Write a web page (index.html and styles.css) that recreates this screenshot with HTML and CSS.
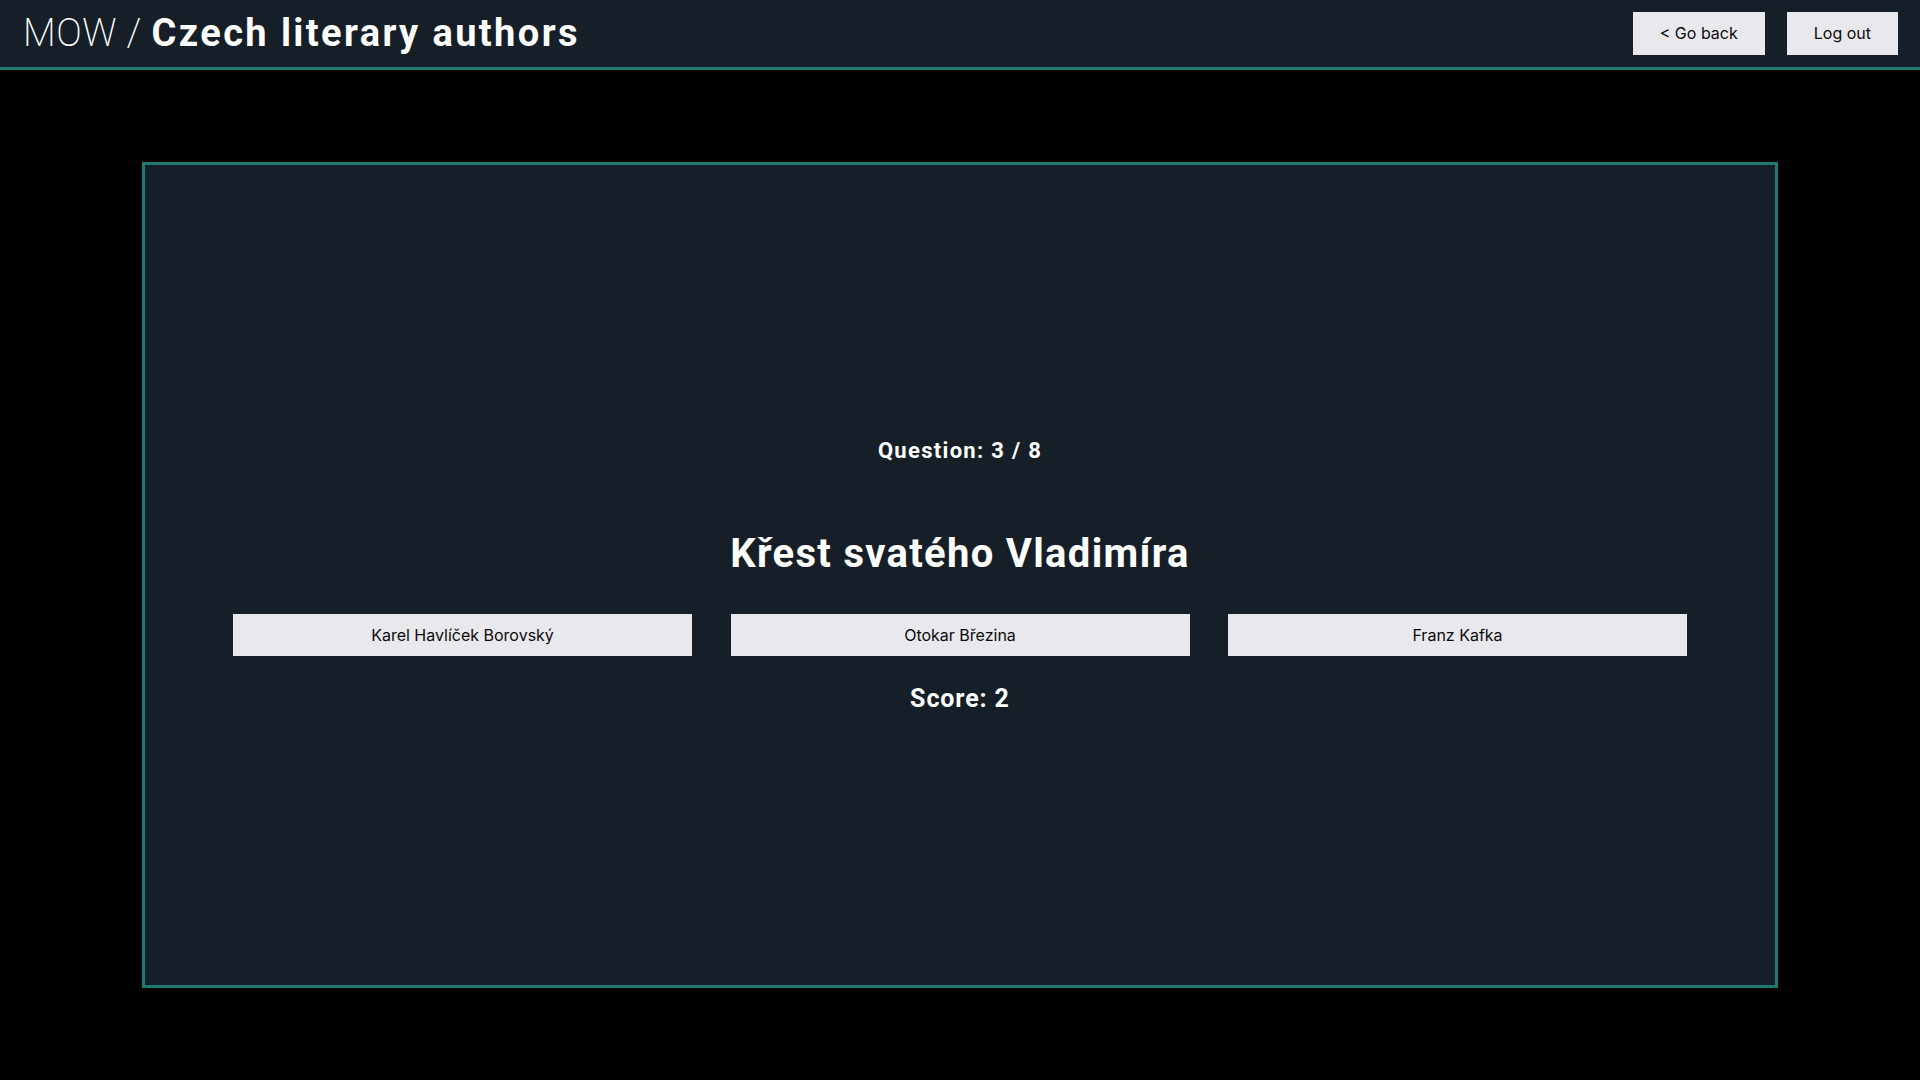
FILE: index.html
```html
<!DOCTYPE html>
<html lang="cs">
<head>
<meta charset="utf-8">
<title>MOW / Czech literary authors</title>
<link rel="stylesheet" href="styles.css">
</head>
<body>
<header class="topbar">
  <h1 class="brand"><span class="brand-light">MOW / </span><span class="brand-bold">Czech literary authors</span></h1>
  <nav class="actions">
    <button class="btn">&lt; Go back</button>
    <button class="btn">Log out</button>
  </nav>
</header>
<main class="stage">
  <section class="card">
    <p class="question">Question: 3 / 8</p>
    <h2 class="prompt">Křest svatého Vladimíra</h2>
    <div class="answers">
      <button class="answer">Karel Havlíček Borovský</button>
      <button class="answer">Otokar Březina</button>
      <button class="answer">Franz Kafka</button>
    </div>
    <p class="score">Score: 2</p>
  </section>
</main>
</body>
</html>
```
FILE: styles.css
```css
* { box-sizing: border-box; }
html, body { margin: 0; padding: 0; }
body {
  background: #000;
  color: #fff;
  font-family: Roboto, "Liberation Sans", sans-serif;
  height: 1080px;
  overflow: hidden;
}
.topbar {
  height: 70px;
  background: #161f28;
  border-bottom: 3px solid #1f7a76;
  display: flex;
  align-items: center;
  justify-content: space-between;
  padding: 0 22px 0 23px;
}
.brand {
  margin: 0;
  font-size: 38px;
  line-height: 44px;
  font-weight: 700;
  white-space: nowrap;
  position: relative;
  top: -1px;
}
.brand-light { font-weight: 200; letter-spacing: 0.5px; }
.brand-bold { font-weight: 700; letter-spacing: 2.4px; }
.actions {
  display: flex;
  gap: 22px;
  align-items: center;
  margin-top: -1px;
}
.btn, .answer {
  font-family: Inter, Roboto, "Liberation Sans", sans-serif;
  font-size: 16px;
  color: #0b0b0b;
  background: #e9e8ed;
  border: none;
  border-radius: 0;
  cursor: pointer;
}
.btn {
  height: 43px;
  padding: 0 27px;
}
.stage {
  height: 1010px;
  display: flex;
  align-items: center;
  justify-content: center;
}
.card {
  width: 1636px;
  height: 826px;
  background: #161f28;
  border: 3px solid #1f7a76;
  display: flex;
  flex-direction: column;
  align-items: center;
  justify-content: center;
}
.question {
  margin: 0;
  font-size: 22px;
  line-height: 30px;
  font-weight: 700;
  letter-spacing: 1.3px;
}
.prompt {
  margin: 64px 0 0;
  font-size: 40px;
  line-height: 48px;
  font-weight: 700;
  letter-spacing: 1.3px;
}
.answers {
  margin-top: 36px;
  display: flex;
  gap: 38.5px;
}
.answer {
  width: 459px;
  height: 42px;
}
.score {
  margin: 28px 0 0;
  font-size: 25px;
  line-height: 30px;
  font-weight: 700;
  letter-spacing: 0.9px;
}
```
